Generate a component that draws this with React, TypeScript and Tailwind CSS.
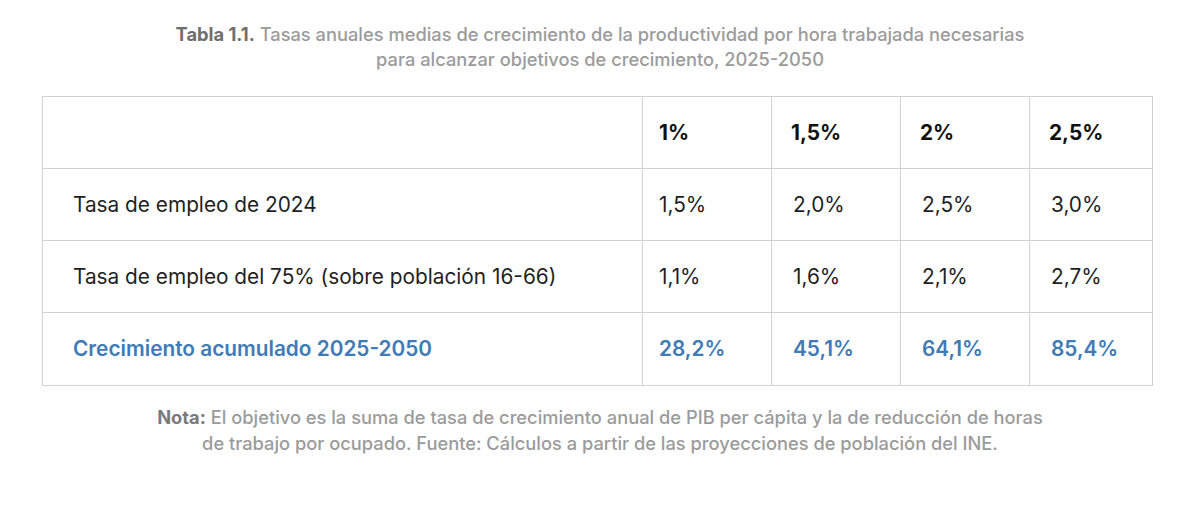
export default function App() {
    const rows = [
        { label: 'Tasa de empleo de 2024', values: ['1,5%', '2,0%', '2,5%', '3,0%'] },
        {
            label: 'Tasa de empleo del 75% (sobre población 16-66)',
            values: ['1,1%', '1,6%', '2,1%', '2,7%'],
        },
    ];
    const totals = ['28,2%', '45,1%', '64,1%', '85,4%'];
    const headers = ['1%', '1,5%', '2%', '2,5%'];

    return (
        <div
            className="w-[1200px] h-[507px] bg-white pt-[22px]"
            style={{ fontFamily: 'Inter, "Noto Sans", sans-serif' }}
        >
            {/* caption */}
            <p className="text-center text-[18.3px] leading-[25px] font-medium text-[#9b9b9b]">
                <span className="font-bold text-[#6f6f6f]">Tabla 1.1.</span> Tasas
                anuales medias de crecimiento de la productividad por hora trabajada
                necesarias
                <br />
                para alcanzar objetivos de crecimiento, 2025-2050
            </p>

            <table className="ml-[42px] mt-[24px] w-[1110px] border-collapse table-fixed text-[20.8px] text-[#1f1f1f]">
                <colgroup>
                    <col className="w-[600px]" />
                    <col className="w-[129px]" />
                    <col className="w-[129px]" />
                    <col className="w-[129px]" />
                    <col className="w-[123px]" />
                </colgroup>
                <thead>
                    <tr className="h-[72px]">
                        <th className="border border-[#d2d2d2]"></th>
                        {headers.map((h, i) => (
                            <th
                                key={h}
                                className={`border border-[#d2d2d2] text-left font-bold text-[#111] ${i == 0 ? 'pl-4' : 'pl-[19px]'}`}
                            >
                                {h}
                            </th>
                        ))}
                    </tr>
                </thead>
                <tbody>
                    {rows.map((row) => (
                        <tr key={row.label} className="h-[72px]">
                            <td className="border border-[#d2d2d2] pl-[30px]">{row.label}</td>
                            {row.values.map((v, i) => (
                                <td
                                    key={i}
                                    className={`border border-[#d2d2d2] ${i == 0 ? 'pl-4' : 'pl-[21px]'}`}
                                >
                                    {v}
                                </td>
                            ))}
                        </tr>
                    ))}
                    <tr className="h-[73px] text-[#3f7bb6] font-semibold">
                        <td className="border border-[#d2d2d2] pl-[30px]">
                            Crecimiento acumulado 2025-2050
                        </td>
                        {totals.map((v, i) => (
                            <td
                                key={v}
                                className={`border border-[#d2d2d2] ${i == 0 ? 'pl-4' : 'pl-[21px]'}`}
                            >
                                {v}
                            </td>
                        ))}
                    </tr>
                </tbody>
            </table>

            {/* note */}
            <p className="mt-[18px] text-center text-[18.3px] leading-[26px] font-medium text-[#9b9b9b]">
                <span className="font-bold text-[#7a7a7a]">Nota:</span> El objetivo es la
                suma de tasa de crecimiento anual de PIB per cápita y la de reducción de
                horas
                <br />
                de trabajo por ocupado. Fuente: Cálculos a partir de las proyecciones de
                población del INE.
            </p>
        </div>
    );
}
